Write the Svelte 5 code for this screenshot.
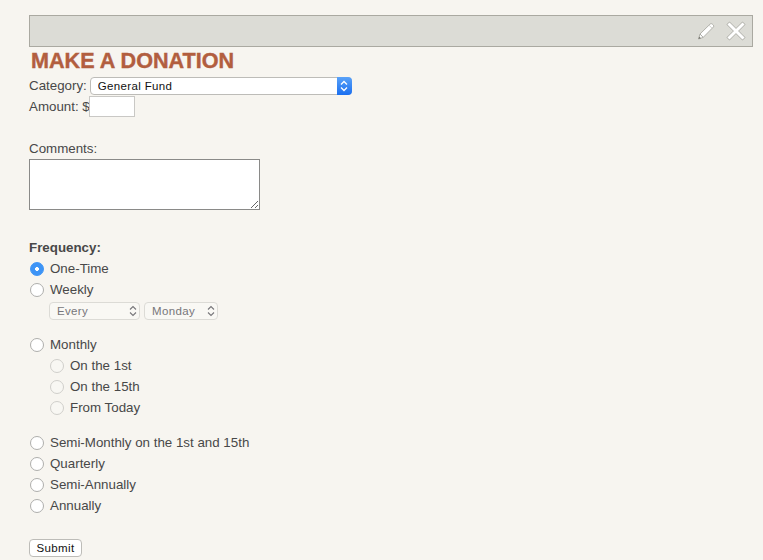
<script>
  const categories = ['General Fund'];
  const repeatEvery = ['Every'];
  const weekdays = ['Monday'];

  const monthlyDays = ['On the 1st', 'On the 15th', 'From Today'];
  const laterOptions = ['Semi-Monthly on the 1st and 15th', 'Quarterly', 'Semi-Annually', 'Annually'];

  let frequency = 'One-Time';
</script>

<div class="page">
  <div class="toolbar">
    <svg class="icon" width="20" height="20" viewBox="0 0 20 20">
      <path d="M2.5 18 L4 13 L14.2 3 Q15.2 2.2 16.2 3 L17.4 4.2 Q18.2 5.2 17.4 6 L7.2 16.4 Z" fill="#fff" stroke="#a9a9a3" stroke-width="0.9" />
      <path d="M4 13 L7.2 16.4" stroke="#a9a9a3" stroke-width="1" />
      <path d="M13 4.2 L16.2 7.4" stroke="#c4c4be" stroke-width="0.8" />
      <path d="M2.5 18 L3.2 15.5 L5 17.2 Z" fill="#77776f" />
    </svg>
    <svg class="icon" width="20" height="20" viewBox="0 0 20 20">
      <path d="M3.5 3.5 L16.5 16.5 M16.5 3.5 L3.5 16.5" stroke="#b0b0aa" stroke-width="4.4" stroke-linecap="square" />
      <path d="M3.5 3.5 L16.5 16.5 M16.5 3.5 L3.5 16.5" stroke="#fff" stroke-width="3" stroke-linecap="square" />
    </svg>
  </div>

  <h1>Make a Donation</h1>

  <div class="row category">
    <label for="category">Category:</label>
    <div class="select-wrap blue">
      <select id="category">
        {#each categories as c}
          <option>{c}</option>
        {/each}
      </select>
      <span class="cap">
        <svg width="8" height="12" viewBox="0 0 8 12">
          <path d="M1 4.5 L4 1.5 L7 4.5 M1 7.5 L4 10.5 L7 7.5" fill="none" stroke="#fff" stroke-width="1.3" />
        </svg>
      </span>
    </div>
  </div>

  <div class="row amount">
    <label for="amount">Amount: $</label>
    <input id="amount" type="text" />
  </div>

  <label class="comments-label" for="comments">Comments:</label>
  <textarea id="comments"></textarea>

  <div class="frequency-label">Frequency:</div>

  <label class="option">
    <input type="radio" bind:group={frequency} value="One-Time" />
    One-Time
  </label>
  <label class="option">
    <input type="radio" bind:group={frequency} value="Weekly" />
    Weekly
  </label>
  <div class="weekly">
    <div class="select-wrap small every">
      <select disabled>
        {#each repeatEvery as r}
          <option>{r}</option>
        {/each}
      </select>
      <svg width="8" height="12" viewBox="0 0 8 12">
        <path d="M1 4.5 L4 1.5 L7 4.5 M1 7.5 L4 10.5 L7 7.5" fill="none" stroke="#77767a" stroke-width="1.1" />
      </svg>
    </div>
    <div class="select-wrap small day">
      <select disabled>
        {#each weekdays as d}
          <option>{d}</option>
        {/each}
      </select>
      <svg width="8" height="12" viewBox="0 0 8 12">
        <path d="M1 4.5 L4 1.5 L7 4.5 M1 7.5 L4 10.5 L7 7.5" fill="none" stroke="#77767a" stroke-width="1.1" />
      </svg>
    </div>
  </div>

  <label class="option">
    <input type="radio" bind:group={frequency} value="Monthly" />
    Monthly
  </label>
  <div class="monthly">
    {#each monthlyDays as day}
      <label class="option sub">
        <input type="radio" name="monthly" disabled />
        {day}
      </label>
    {/each}
  </div>

  {#each laterOptions as opt}
    <label class="option">
      <input type="radio" bind:group={frequency} value={opt} />
      {opt}
    </label>
  {/each}

  <button type="button">Submit</button>
</div>

<style>
  :global(body) {
    background: #f7f5f0;
  }
  .page {
    display: flex;
    flex-direction: column;
    align-items: flex-start;
    box-sizing: border-box;
    height: 560px;
    padding: 15px 10px 0 29px;
    font-family: "Liberation Sans", Arial, sans-serif;
    font-size: 13.33px;
    line-height: 21px;
    color: #484848;
  }
  .toolbar {
    display: flex;
    justify-content: flex-end;
    align-items: center;
    gap: 10px;
    box-sizing: border-box;
    align-self: stretch;
    height: 32px;
    padding-right: 6px;
    background: #dcdcd6;
    border: 1px solid #aaa9a1;
  }
  h1 {
    margin: 1px 0 0 2px;
    font-size: 21.6px;
    line-height: 26px;
    font-weight: bold;
    text-transform: uppercase;
    color: #b25e3f;
    -webkit-text-stroke: 0.4px #b25e3f;
  }
  .row {
    display: flex;
    align-items: center;
    height: 21px;
  }
  .category {
    margin-top: 1px;
  }
  .select-wrap {
    position: relative;
    display: flex;
    box-sizing: border-box;
  }
  select {
    appearance: none;
    box-sizing: border-box;
    width: 100%;
    height: 100%;
    margin: 0;
    outline: none;
    font-family: "Liberation Sans", Arial, sans-serif;
  }
  .blue {
    width: 262px;
    height: 18px;
    margin-left: 3px;
  }
  .blue select {
    padding: 0 20px 0 7px;
    background: #fff;
    border: 1px solid #bdbcb8;
    border-radius: 4px;
    font-size: 11.5px;
    letter-spacing: 0.35px;
    color: #111;
  }
  .cap {
    position: absolute;
    top: 0;
    right: 0;
    display: flex;
    align-items: center;
    justify-content: center;
    width: 15px;
    height: 18px;
    background: linear-gradient(#5aa2f8, #1b6ff0);
    border-radius: 0 4px 4px 0;
    pointer-events: none;
  }
  .amount input {
    box-sizing: border-box;
    width: 46px;
    height: 21px;
    margin: 0 0 0 -1px;
    background: #fff;
    border: 1px solid #c9c8c5;
    outline: none;
  }
  .comments-label {
    margin-top: 21px;
    height: 21px;
  }
  textarea {
    box-sizing: border-box;
    width: 231px;
    height: 51px;
    margin: 0;
    background: #fff;
    border: 1px solid #8a8a88;
    outline: none;
  }
  .frequency-label {
    margin-top: 27px;
    font-weight: bold;
  }
  .option {
    display: flex;
    align-items: center;
    height: 21px;
  }
  input[type="radio"] {
    appearance: none;
    box-sizing: border-box;
    flex: none;
    width: 14px;
    height: 14px;
    margin: 0 6px 0 1px;
    background: #fff;
    border: 1px solid #aeaeac;
    border-radius: 50%;
  }
  input[type="radio"]:checked {
    background: radial-gradient(circle, #fff 0 1.6px, #3d94f6 2.2px);
    border-color: #3d94f6;
  }
  input[type="radio"]:disabled {
    background: #f8f7f3;
    border-color: #d0cfcb;
  }
  .weekly {
    display: flex;
    gap: 4px;
    margin: 2px 0 14px 20px;
  }
  .small {
    height: 18px;
  }
  .small select {
    padding: 0 0 0 7px;
    background: #f9f8f4;
    border: 1px solid #dcdbd6;
    border-radius: 4px;
    font-size: 11.5px;
    letter-spacing: 0.35px;
    color: #77767a;
    opacity: 1;
  }
  .small svg {
    position: absolute;
    top: 3px;
    right: 3px;
    pointer-events: none;
  }
  .every {
    width: 91px;
  }
  .day {
    width: 74px;
  }
  .monthly {
    display: flex;
    flex-direction: column;
    margin: 0 0 14px 20px;
  }
  button {
    box-sizing: border-box;
    width: 53px;
    height: 18px;
    margin: 23px 0 0 0;
    padding: 0;
    background: #fff;
    border: 1px solid #bdbcb8;
    border-radius: 4px;
    font-family: "Liberation Sans", Arial, sans-serif;
    font-size: 11.5px;
    letter-spacing: 0.35px;
    color: #111;
  }
</style>
